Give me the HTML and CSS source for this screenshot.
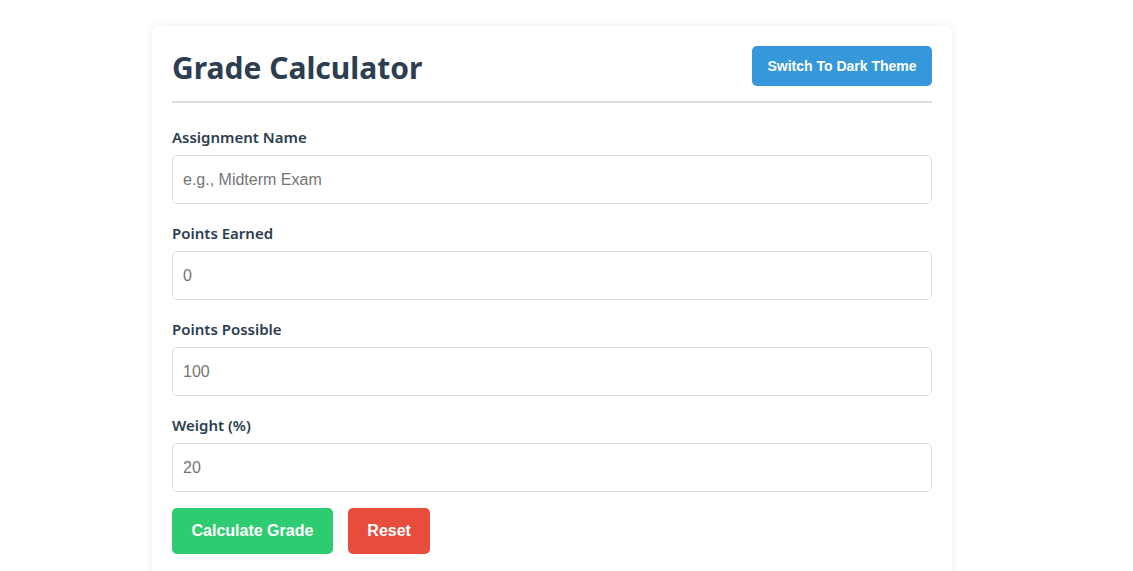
FILE: index.html
```html
<!DOCTYPE html>
<html lang="en">
<head>
<meta charset="utf-8">
<title>Grade Calculator</title>
<link rel="stylesheet" href="styles.css">
</head>
<body>
<div class="card">
  <div class="header">
    <h1 class="title">Grade Calculator</h1>
    <button class="btn btn-theme">Switch To Dark Theme</button>
  </div>
  <form class="form">
    <div class="group">
      <label class="label">Assignment Name</label>
      <input class="input" type="text" placeholder="e.g., Midterm Exam">
    </div>
    <div class="group">
      <label class="label">Points Earned</label>
      <input class="input" type="text" placeholder="0">
    </div>
    <div class="group">
      <label class="label">Points Possible</label>
      <input class="input" type="text" placeholder="100">
    </div>
    <div class="group group-last">
      <label class="label">Weight (%)</label>
      <input class="input" type="text" placeholder="20">
    </div>
    <div class="actions">
      <button type="button" class="btn btn-calc">Calculate Grade</button>
      <button type="button" class="btn btn-reset">Reset</button>
    </div>
  </form>
</div>
</body>
</html>
```
FILE: styles.css
```css
html, body {
  margin: 0;
  padding: 0;
  background: #ffffff;
}
body {
  font-family: "Noto Sans", "Open Sans", sans-serif;
  color: #2c3e50;
}
.card {
  width: 800px;
  box-sizing: border-box;
  margin: 26px 0 0 152px;
  padding: 20px 20px 40px;
  background: #fff;
  border-radius: 8px;
  box-shadow: 0 0 10px rgba(0, 0, 0, 0.08);
}
.header {
  display: flex;
  align-items: center;
  justify-content: space-between;
  height: 40px;
  padding-bottom: 15px;
  border-bottom: 2px solid #dddddd;
  margin-bottom: 23px;
}
.title {
  margin: 0;
  padding-top: 3px;
  font-size: 30px;
  font-weight: 700;
  line-height: 40px;
  color: #2c3e50;
}
.btn {
  border: none;
  border-radius: 5px;
  color: #fff;
  font-family: "Liberation Sans", Arial, sans-serif;
  font-weight: 700;
  cursor: pointer;
}
.btn-theme {
  background: #3498db;
  font-size: 14px;
  line-height: 16px;
  padding: 12px 10px;
  width: 180px;
}
.form {
  display: flex;
  flex-direction: column;
}
.group {
  display: flex;
  flex-direction: column;
  margin-bottom: 18px;
}
.group-last {
  margin-bottom: 16px;
}
.label {
  font-size: 15px;
  font-weight: 600;
  line-height: 22px;
  margin-bottom: 7px;
  color: #2c3e50;
}
.input {
  box-sizing: border-box;
  height: 49px;
  padding: 0 10px;
  border: 1px solid #dddddd;
  border-radius: 5px;
  font-family: "Liberation Sans", Arial, sans-serif;
  font-size: 16px;
  color: #333;
  background: #fff;
  outline: none;
}
.input::placeholder {
  color: #757575;
}
.actions {
  display: flex;
  gap: 15px;
}
.btn-calc, .btn-reset {
  font-size: 16px;
  line-height: 18px;
  padding: 14px 19.5px;
}
.btn-calc {
  background: #2ecc71;
}
.btn-reset {
  background: #e74c3c;
}
```
